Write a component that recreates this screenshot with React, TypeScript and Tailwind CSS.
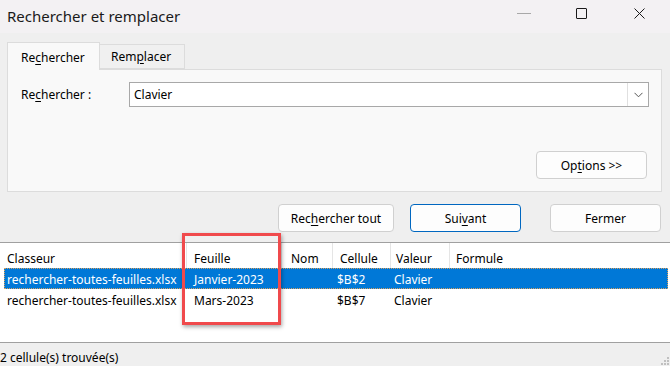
import React from "react";

const U = ({ children }: { children: React.ReactNode }) => (
  <span className="underline underline-offset-2 decoration-1">{children}</span>
);

const cols = [
  { w: "w-[187px]", hp: "pl-[7px]", rp: "pl-[7px]", label: "Classeur" },
  { w: "w-[95px]", hp: "pl-[7px]", rp: "pl-[7px]", label: "Feuille" },
  { w: "w-[51px]", hp: "pl-[9px]", rp: "pl-[9px]", label: "Nom" },
  { w: "w-[58px]", hp: "pl-[7px]", rp: "pl-[4px]", label: "Cellule" },
  { w: "w-[59px]", hp: "pl-[5px]", rp: "pl-[3px]", label: "Valeur" },
];

const rows = [
  ["rechercher-toutes-feuilles.xlsx", "Janvier-2023", "", "$B$2", "Clavier"],
  ["rechercher-toutes-feuilles.xlsx", "Mars-2023", "", "$B$7", "Clavier"],
];

export default function App() {
  return (
    <div
      className="w-[670px] h-[366px] overflow-hidden bg-[#efefef] flex flex-col relative text-[12px] text-[#000]"
      style={{ fontFamily: '"Noto Sans", "Open Sans", sans-serif' }}
    >
      {/* Title bar */}
      <div className="h-[33px] bg-[#f3f1f3] flex items-center shrink-0">
        <div className="pl-[7px] text-[15px] text-[#1a1a1a] leading-none -mt-[1px]">
          Rechercher et remplacer
        </div>
        <div className="ml-auto flex items-center h-full">
          <div className="w-[14px] h-px bg-[#a8a8a8] mr-[45px] -mt-[6px]" />
          <div className="w-[11px] h-[11px] border border-[#1a1a1a] rounded-[1px] mr-[47px] -mt-[6px]" />
          <svg width="11" height="11" viewBox="0 0 11 11" className="mr-[25px] -mt-[6px]">
            <path d="M0.5 0.5 L10.5 10.5 M10.5 0.5 L0.5 10.5" stroke="#1a1a1a" strokeWidth="1" />
          </svg>
        </div>
      </div>

      {/* Tabs */}
      <div className="flex items-end px-[7px] pt-[9px] shrink-0">
        <div className="w-[93px] h-[28px] bg-[#f9f9f9] border border-b-0 border-[#dcdcdc] flex items-center pl-[13px] pt-[2px] relative z-10 -mb-px">
          <span>
            Re<U>c</U>hercher
          </span>
        </div>
        <div className="w-[85px] h-[25px] bg-[#f0f0f0] border border-l-0 border-[#dcdcdc] flex items-center pl-[11px] pt-[1px]">
          <span>
            Rem<U>p</U>lacer
          </span>
        </div>
      </div>

      {/* Panel */}
      <div className="mx-[7px] w-[655px] h-[123px] bg-[#f9f9f9] border border-[#dcdcdc] flex flex-col shrink-0">
        <div className="flex items-center mt-[12px]">
          <div className="w-[121px] pl-[13px]">
            Re<U>c</U>hercher :
          </div>
          <div className="w-[520px] h-[25px] bg-white border border-[#a8a8a8] flex items-center">
            <div className="flex-1 pl-[4px]">Clavier</div>
            <div className="w-[21px] h-full border-l border-[#e0e0e0] flex items-center justify-center">
              <svg width="9" height="6" viewBox="0 0 9 6">
                <path d="M0.5 0.8 L4.5 4.8 L8.5 0.8" stroke="#555" strokeWidth="1" fill="none" />
              </svg>
            </div>
          </div>
        </div>
        <div className="flex justify-end mt-[44px] pr-[14px]">
          <div className="w-[111px] h-[28px] bg-[#fdfdfd] border border-[#d0d0d0] rounded-[4px] flex items-center justify-center pt-[1px]">
            <span>
              Op<U>t</U>ions &gt;&gt;
            </span>
          </div>
        </div>
      </div>

      {/* Buttons row */}
      <div className="flex mt-[12px] shrink-0">
        <div className="ml-[278px] w-[116px] h-[28px] bg-[#fdfdfd] border border-[#d0d0d0] rounded-[4px] flex items-center justify-center pt-[1px]">
          <span>
            Rec<U>h</U>ercher tout
          </span>
        </div>
        <div className="ml-[16px] w-[111px] h-[28px] bg-[#fdfdfd] border border-[#0067c0] rounded-[4px] flex items-center justify-center pt-[1px]">
          <span>
            Sui<U>v</U>ant
          </span>
        </div>
        <div className="ml-[29px] w-[111px] h-[28px] bg-[#fdfdfd] border border-[#d0d0d0] rounded-[4px] flex items-center justify-center pt-[1px]">
          Fermer
        </div>
      </div>

      {/* List */}
      <div className="mt-[10px] h-[101px] bg-white border-t border-b border-[#a0a0a0] flex flex-col shrink-0 relative">
        <div className="h-[25px] flex items-stretch">
          {cols.map((c) => (
            <div
              key={c.label}
              className={`${c.w} ${c.hp} flex items-center pt-[6px] border-r border-[#e5e5e5]`}
            >
              {c.label}
            </div>
          ))}
          <div className="flex-1 pl-[6px] flex items-center pt-[6px]">Formule</div>
        </div>
        {rows.map((r, i) => (
          <div
            key={i}
            className={
              i === 0
                ? "h-[21px] ml-[4px] mr-[2px] flex items-center pt-[3px] bg-[#0078d7] text-white border border-dotted border-[#d8a060]"
                : "h-[21px] ml-[4px] mr-[2px] flex items-center pt-[3px]"
            }
          >
            {cols.map((c, j) => (
              <div
                key={j}
                className={`${j === 0 ? (i === 0 ? "w-[182px] pl-[2px]" : "w-[183px] pl-[3px]") : c.w} ${j === 0 ? "" : c.rp} whitespace-nowrap leading-none`}
              >
                {r[j]}
              </div>
            ))}
          </div>
        ))}

        {/* Red highlight */}
        <div className="absolute left-[182px] top-[-10px] w-[99px] h-[92px] border-[3px] border-[#f04a4c] shadow-[1px_2px_4px_rgba(0,0,0,0.35)] pointer-events-none" />
      </div>

      {/* Status bar */}
      <div className="flex-1 flex items-center relative pt-[6px]">
        <div className="leading-none">2 cellule(s) trouvée(s)</div>
        <svg width="10" height="10" viewBox="0 0 10 10" className="absolute right-0 bottom-0">
          <rect x="7" y="1" width="2" height="2" fill="#c0c0c0" />
          <rect x="4" y="4" width="2" height="2" fill="#c0c0c0" />
          <rect x="7" y="4" width="2" height="2" fill="#c0c0c0" />
          <rect x="1" y="7" width="2" height="2" fill="#c0c0c0" />
          <rect x="4" y="7" width="2" height="2" fill="#c0c0c0" />
          <rect x="7" y="7" width="2" height="2" fill="#c0c0c0" />
        </svg>
      </div>
    </div>
  );
}
